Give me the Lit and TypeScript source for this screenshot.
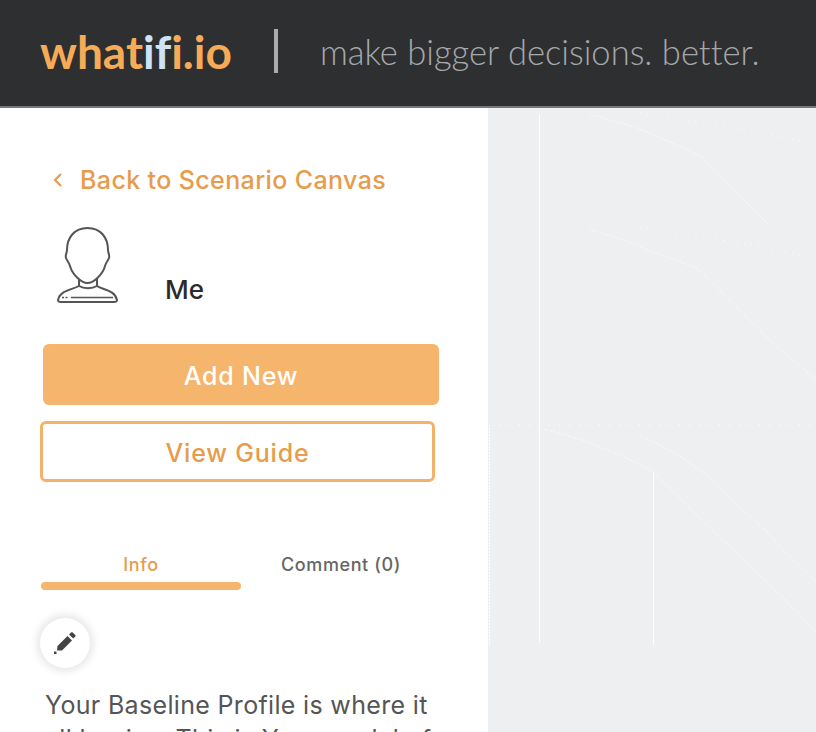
import { LitElement, html, css } from 'lit';
import { customElement } from 'lit/decorators.js';

@customElement('app-root')
export class AppRoot extends LitElement {
    static styles = css`
        :host {
            display: block;
            width: 816px;
            height: 732px;
            overflow: hidden;
            font-family: 'Lato', 'Liberation Sans', sans-serif;
        }

        .topbar {
            display: flex;
            align-items: center;
            height: 108px;
            box-sizing: border-box;
            padding: 0 0 4px 40px;
            background: #2e2f31;
            border-bottom: 2px solid #77787a;
        }

        .logo {
            font-size: 46px;
            color: #f6ab56;
            font-weight: 700;
            font-variant-ligatures: none;
        }

        .logo span {
            color: #cfe3f7;
        }

        .divider {
            width: 4px;
            height: 44px;
            background: #a9abae;
            margin: 0 42px 0 42px;
        }

        .tagline {
            font-size: 34.6px;
            font-weight: 300;
            color: #a6a8ab;
            font-variant-ligatures: none;
        }

        .content {
            position: relative;
            display: flex;
            height: 624px;
            overflow: hidden;
            background: #eeeff1;
        }

        .lines {
            position: absolute;
            left: 0;
            top: 0;
        }

        .panel {
            width: 488px;
            height: 624px;
            flex: none;
            box-sizing: border-box;
            padding: 56px 0 0 40px;
            background: #fff;
            font-family: 'Inter', 'Liberation Sans', sans-serif;
            overflow: hidden;
        }

        .back {
            display: flex;
            align-items: center;
            gap: 17px;
            margin-left: 13px;
            color: #e79c4b;
            font-size: 25px;
            font-weight: 500;
            line-height: 32px;
            letter-spacing: 0.38px;
        }

        .person {
            display: flex;
            align-items: flex-end;
            gap: 46px;
            margin: 31px 0 0 17px;
        }

        .person span {
            font-size: 26px;
            font-weight: 500;
            color: #2b2b2b;
            line-height: 32px;
            margin-bottom: -1px;
        }

        .btn {
            display: flex;
            align-items: center;
            justify-content: center;
            box-sizing: border-box;
            padding-top: 2px;
            font-size: 25px;
            font-weight: 500;
            letter-spacing: 0.8px;
            border-radius: 6px;
        }

        .add {
            width: 396px;
            height: 61px;
            margin: 39px 0 0 3px;
            background: #f6b56c;
            color: #fff;
        }

        .guide {
            width: 395px;
            height: 61px;
            margin-top: 16px;
            background: #fff;
            color: #e79c4b;
            border: 3px solid #f4b16a;
        }

        .tabs {
            display: grid;
            grid-template-columns: 200px 200px;
            margin: 72px 0 0 1px;
            font-size: 18px;
            font-weight: 500;
            letter-spacing: 0.6px;
            text-align: center;
        }

        .tab {
            color: #666;
            line-height: 22px;
        }

        .tab.on {
            color: #e79c4b;
        }

        .bar {
            width: 200px;
            height: 8px;
            margin: 6px 0 0 1px;
            border-radius: 4px;
            background: #f6b56c;
        }

        .edit {
            display: flex;
            align-items: center;
            justify-content: center;
            width: 50px;
            height: 50px;
            margin: 28px 0 0 0;
            border-radius: 50%;
            background: #fff;
            box-shadow: 0 0 7px 4px #e9eaec;
        }

        .copy {
            width: 400px;
            margin: 20px 0 0 5px;
            color: #555;
            font-size: 25px;
            line-height: 34px;
            letter-spacing: 0.33px;
        }
    `;

    render() {
        return html`
            <div class="topbar">
                <div class="logo">what<span>if</span>i.io</div>
                <div class="divider"></div>
                <div class="tagline">make bigger decisions. better.</div>
            </div>
            <div class="content">
                <div class="panel">
                    <div class="back">
                        <svg width="10" height="16" viewBox="0 0 10 16" fill="none" stroke="#e79c4b" stroke-width="2.2">
                            <path d="M8 2 L2 8 L8 14"></path>
                        </svg>
                        Back to Scenario Canvas
                    </div>
                    <div class="person">
                        <svg width="62" height="78" viewBox="0 0 62 78" fill="none" stroke="#555" stroke-width="2">
                            <path d="M30.5 1 C17 1 10 11 10 23 C10 26 8 28 9 31 C10 34 12 35 13 39 C15 47 24 56 30.5 56 C37 56 46 47 48 39 C49 35 51 34 52 31 C53 28 51 26 51 23 C51 11 44 1 30.5 1 Z"></path>
                            <path d="M22 52 V59 C15 63 3 63 1 73 C1 75 2 75 4 75 H57 C59 75 60 75 60 73 C58 63 46 63 40 59 V52"></path>
                            <path d="M22 59 C27 62 35 62 40 59"></path>
                            <path d="M5 70.5 H12" stroke-width="1.4" stroke-dasharray="2 1.5"></path>
                            <path d="M14 70.5 H56" stroke-width="1.6"></path>
                        </svg>
                        <span>Me</span>
                    </div>
                    <div class="btn add">Add New</div>
                    <div class="btn guide">View Guide</div>
                    <div class="tabs">
                        <div class="tab on">Info</div>
                        <div class="tab">Comment (0)</div>
                    </div>
                    <div class="bar"></div>
                    <div class="edit">
                        <svg width="24" height="24" viewBox="0 0 24 24" fill="#444">
                            <path d="M1 23 L1 20.5 L3.5 20.5 L3.5 23 Z"></path>
                            <path d="M4 19.5 L4.5 15 L14.5 5 L19 9.5 L9 19.5 Z"></path>
                            <path d="M16 3.5 L18 1.5 C18.6 1 19.2 1 19.7 1.5 L22.3 4 C22.8 4.5 22.8 5 22.3 5.6 L20.3 7.6 Z"></path>
                        </svg>
                    </div>
                    <div class="copy">Your Baseline Profile is where it all begins. This is Your model of</div>
                </div>
                <svg class="lines" width="816" height="624" viewBox="0 0 816 624" fill="none" stroke="#fff" stroke-width="1">
                    <path d="M539.5 7 V535"></path>
                    <path d="M653.5 364 V537"></path>
                    <path d="M489.5 320 V537" stroke-dasharray="2 1"></path>
                    <path d="M590 7 C612 12 632 18 647 24 C670 34 690 42 703 50 C725 72 750 98 770 118" stroke-dasharray="1 1.5"></path>
                    <path d="M590 122 C612 128 632 134 647 142 C670 150 690 156 703 165 C725 188 750 212 773 235 C790 250 805 262 816 272" stroke-dasharray="1 1.5"></path>
                    <path d="M640 5 C700 14 760 24 816 37" stroke-dasharray="1 6"></path>
                    <path d="M640 120 C700 128 760 138 816 150" stroke-dasharray="1 6"></path>
                    <path d="M489 317 H816" stroke-dasharray="1 9"></path>
                    <path d="M539 320 C565 326 590 335 613 344 C628 350 642 358 653 364 C660 372 670 380 677 387 C700 410 730 440 755 462 C775 482 790 497 803 510 L816 525" stroke-dasharray="1 1.5"></path>
                    <path d="M640 328 C670 340 695 358 713 372 C730 390 745 405 763 420 C780 440 800 458 816 474" stroke-dasharray="1 1.5"></path>
                </svg>
            </div>
        `;
    }
}
